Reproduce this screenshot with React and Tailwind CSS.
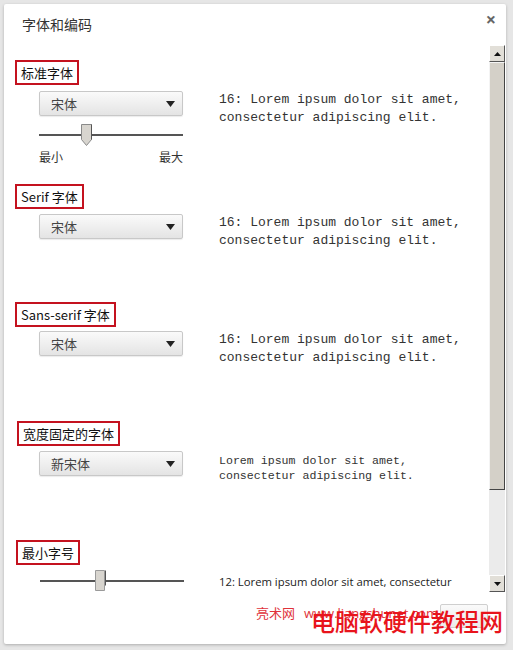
const cjk = { fontFamily: '"Noto Sans CJK SC", "Noto Sans", sans-serif' };
const mono = { fontFamily: '"Liberation Mono", "Noto Sans CJK SC", monospace' };
const sans = { fontFamily: '"Open Sans", "Noto Sans", sans-serif' };

const Label = ({ children }) => (
  <div className="flex">
    <div
      className="h-[25px] flex items-center border-2 border-[#c4121f] px-[4px] text-[13px] text-[#111] leading-none"
      style={cjk}
    >
      {children}
    </div>
  </div>
);

const Select = ({ value }) => (
  <div className="w-[144px] h-[25px] shrink-0 flex items-center justify-between pl-[11px] pr-[7px] rounded-[2px] border border-[#c8c8c8] bg-gradient-to-b from-[#fafafa] to-[#e4e4e4] shadow-[0_1px_1px_rgba(0,0,0,0.08)]">
    <span className="text-[13px] text-[#444] leading-none" style={cjk}>{value}</span>
    <svg width="9" height="6" viewBox="0 0 9 6"><path d="M0 0h9L4.5 6z" fill="#222" /></svg>
  </div>
);

const Slider = ({ pos, pointed }) => (
  <div className="relative w-[144px] h-[22px] flex items-center">
    <div className="w-full h-[2px] bg-[#555]" />
    <svg className="absolute top-0" style={{ left: pos }} width="11" height="22" viewBox="0 0 11 22">
      {pointed ? (
        <path d="M0.5 0.5h10v15l-5 6l-5-6z" fill="#d8d5cf" stroke="#8a8a8a" />
      ) : (
        <path d="M0.5 0.5h9v20h-9z" fill="#d8d5cf" stroke="#9a9a9a" />
      )}
      <path d="M10.5 0.5v15" stroke="#555" />
    </svg>
  </div>
);

const Sample = ({ children, small }) => (
  <div
    className={small ? 'ml-[36px] text-[11.6px] leading-[15px] text-[#333]' : 'ml-[36px] text-[13px] leading-[18px] text-[#333]'}
    style={mono}
  >
    {children}
  </div>
);

const Scrollbar = () => (
  <div className="w-[16px] h-full flex flex-col">
    <div className="h-[17px] flex items-center justify-center bg-[#e2dfd8] border border-[#fff] border-r-[#555] border-b-[#555]">
      <svg width="7" height="4" viewBox="0 0 7 4"><path d="M3.5 0L7 4H0z" fill="#111" /></svg>
    </div>
    <div className="h-[428px] bg-[#d4d0c8] border border-[#f4f4f4] border-r-[#444] border-b-[#444]" />
    <div className="flex-1 bg-[#ebebeb]" />
    <div className="h-[17px] flex items-center justify-center bg-[#e2dfd8] border border-[#fff] border-r-[#555] border-b-[#555]">
      <svg width="7" height="4" viewBox="0 0 7 4"><path d="M0 0h7L3.5 4z" fill="#111" /></svg>
    </div>
  </div>
);

export default function App() {
  return (
    <div className="w-[513px] h-[650px] bg-[#e6e6e6] pt-[4px] pl-[4px] overflow-hidden">
      <div className="w-[502px] h-[640px] bg-white rounded-[2px] shadow-[0_1px_3px_rgba(0,0,0,0.25)] flex flex-col relative">
        <div className="h-[41px] flex items-start justify-between pl-[18px] pr-[10px]">
          <div className="mt-[13px] text-[14px] text-[#333] leading-none" style={cjk}>字体和编码</div>
          <div className="mt-[6px] text-[18px] font-bold text-[#666] leading-none" style={sans}>×</div>
        </div>

        <div className="h-[547px] flex">
          <div className="flex-1 overflow-hidden pl-[11px]">
            <div className="mt-[15px]">
              <Label>标准字体</Label>
            </div>
            <div className="mt-[6px] flex pl-[24px]">
              <div className="flex flex-col">
                <Select value="宋体" />
                <div className="mt-[8px]">
                  <Slider pos={42} pointed />
                </div>
                <div className="mt-[3px] flex justify-between text-[12px] text-[#333] leading-[16px]" style={cjk}>
                  <span>最小</span>
                  <span>最大</span>
                </div>
              </div>
              <Sample>16: Lorem ipsum dolor sit amet,<br />consectetur adipiscing elit.</Sample>
            </div>

            <div className="mt-[19px]">
              <Label>Serif 字体</Label>
            </div>
            <div className="mt-[5px] h-[25px] flex items-start pl-[24px]">
              <Select value="宋体" />
              <Sample>16: Lorem ipsum dolor sit amet,<br />consectetur adipiscing elit.</Sample>
            </div>

            <div className="mt-[63px]">
              <Label>Sans-serif 字体</Label>
            </div>
            <div className="mt-[4px] h-[25px] flex items-start pl-[24px]">
              <Select value="宋体" />
              <Sample>16: Lorem ipsum dolor sit amet,<br />consectetur adipiscing elit.</Sample>
            </div>

            <div className="mt-[65px] pl-[2px]">
              <Label>宽度固定的字体</Label>
            </div>
            <div className="mt-[5px] h-[25px] flex items-start pl-[24px]">
              <Select value="新宋体" />
              <div className="pt-[2px]">
                <Sample small>Lorem ipsum dolor sit amet,<br />consectetur adipiscing elit.</Sample>
              </div>
            </div>

            <div className="mt-[64px] pl-[1px]">
              <Label>最小字号</Label>
            </div>
            <div className="mt-[5px] flex pl-[25px]">
              <div className="w-[144px]">
                <Slider pos={55} />
              </div>
              <div
                className="ml-[35px] pt-[4px] text-[11.3px] leading-[15px] text-[#222]"
                style={sans}
              >
                12: Lorem ipsum dolor sit amet, consectetur<br />adipiscing elit.
              </div>
            </div>
          </div>
          <div className="mr-[1px]">
            <Scrollbar />
          </div>
        </div>

        <div className="flex-1 flex justify-end items-start pt-[12px] pr-[18px]">
          <div className="w-[48px] h-[24px] border border-[#cfcfcf] rounded-[2px] bg-gradient-to-b from-[#fafafa] to-[#ececec]" />
        </div>

        <div
          className="absolute left-[252px] top-[602px] whitespace-nowrap text-[13px] text-[#e0323a] leading-none"
          style={cjk}
        >
          亮术网 <span className="ml-[6px]" style={sans}>www.liangshunet.com</span>
        </div>
        <div
          className="absolute left-[307px] top-[605px] whitespace-nowrap text-[24px] text-[#e8141c] leading-none font-medium"
          style={cjk}
        >
          电脑软硬件教程网
        </div>
      </div>
    </div>
  );
}
